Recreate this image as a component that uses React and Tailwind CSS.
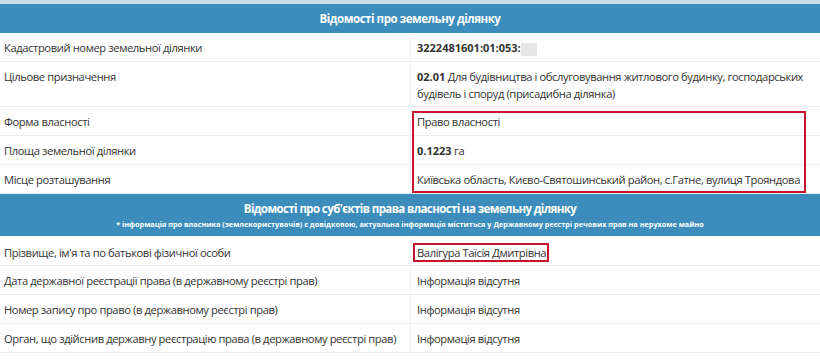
import React from "react";

const font = { fontFamily: '"Open Sans", "Liberation Sans", sans-serif' };

function Row({ label, children, h = "h-[29px]", pt = "pt-[6px]" }) {
  return (
    <div className={`flex border-b border-[#ececec] ${h}`}>
      <div className={`w-[410px] shrink-0 pl-[4px] ${pt} text-[11.2px] tracking-[-0.4px] leading-[17px] text-[#333] whitespace-nowrap`}>
        {label}
      </div>
      <div className={`flex-1 border-l border-[#f1f1f1] pl-[6px] pr-[8px] ${pt} text-[11.2px] tracking-[-0.4px] leading-[17px] text-[#333]`}>
        {children}
      </div>
    </div>
  );
}

export default function App() {
  return (
    <div className="w-[820px] h-[359px] overflow-hidden bg-white" style={font}>
      <div className="h-[4px] bg-[#cfdbe6]" />
      <div className="h-[29px] bg-[#3c8dbc] flex items-center justify-center text-white font-bold text-[11.5px] tracking-[-0.45px]">
        Відомості про земельну ділянку
      </div>
      <Row label="Кадастровий номер земельної ділянки">
        <span className="font-bold text-[11px] tracking-normal">3222481601:01:053:</span>
        <span className="inline-block align-middle w-[16px] h-[13px] bg-[#e6e6e6]" />
      </Row>
      <Row label="Цільове призначення" h="h-[45px]">
        <span className="font-bold text-[11px] tracking-normal">02.01</span> Для будівництва і обслуговування житлового будинку, господарських будівель і споруд (присадибна ділянка)
      </Row>
      <div className="relative">
        <Row label="Форма власності">Право власності</Row>
        <Row label="Площа земельної ділянки">
          <span className="font-bold text-[11px] tracking-normal">0.1223</span> га
        </Row>
        <Row label="Місце розташування">
          <span className="whitespace-nowrap">Київська область, Києво-Святошинський район, с.Гатне, вулиця Трояндова</span>
        </Row>
        <div className="absolute left-[412px] top-[4px] w-[394px] h-[82px] border-2 border-[#c4162f]" />
      </div>
      <div className="h-[42px] bg-[#3c8dbc] flex flex-col items-center pt-[6px] text-white">
        <div className="font-bold text-[11.5px] tracking-[-0.6px] leading-[17px]">
          Відомості про суб'єктів права власності на земельну ділянку
        </div>
        <div className="font-bold text-[7.3px] leading-[12px] mt-[1px]">
          * інформація про власника (землекористувачів) є довідковою, актуальна інформація міститься у Державному реєстрі речових прав на нерухоме майно
        </div>
      </div>
      <Row label="Прізвище, ім'я та по батькові фізичної особи" h="h-[30px]" pt="pt-[8px]">
        <span className="relative inline-block">
          Валігура Таїсія Дмитрівна
          <span className="absolute -left-[4px] -right-[3px] -top-[1px] -bottom-[1px] border-2 border-[#c4162f]" />
        </span>
      </Row>
      <Row label="Дата державної реєстрації права (в державному реєстрі прав)">Інформація відсутня</Row>
      <Row label="Номер запису про право (в державному реєстрі прав)">Інформація відсутня</Row>
      <Row label="Орган, що здійснив державну реєстрацію права (в державному реєстрі прав)">Інформація відсутня</Row>
    </div>
  );
}
